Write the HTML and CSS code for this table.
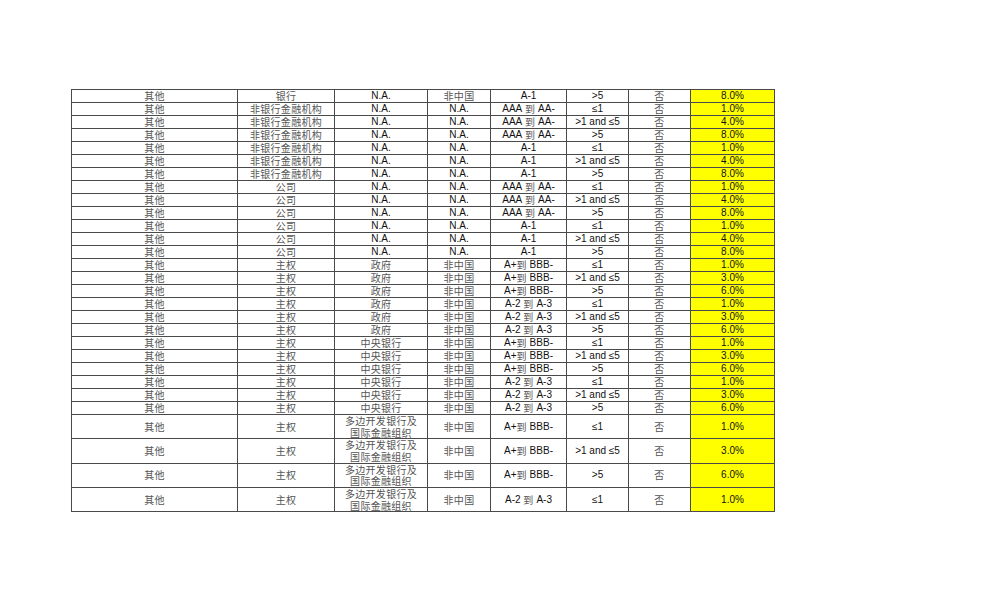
FILE: index.html
```html
<!DOCTYPE html>
<html lang="zh">
<head>
<meta charset="utf-8">
<title>表格</title>
<link rel="stylesheet" href="styles.css">
</head>
<body>
<div class="page">
<div class="grid">
<div class="row"><div class="cell zh">其他</div><div class="cell zh">银行</div><div class="cell">N.A.</div><div class="cell zh">非中国</div><div class="cell">A-1</div><div class="cell">&gt;5</div><div class="cell zh">否</div><div class="cell y">8.0%</div></div>
<div class="row"><div class="cell zh">其他</div><div class="cell zh">非银行金融机构</div><div class="cell">N.A.</div><div class="cell">N.A.</div><div class="cell">AAA&nbsp;<span class="zh">到</span>&nbsp;AA-</div><div class="cell">≤1</div><div class="cell zh">否</div><div class="cell y">1.0%</div></div>
<div class="row"><div class="cell zh">其他</div><div class="cell zh">非银行金融机构</div><div class="cell">N.A.</div><div class="cell">N.A.</div><div class="cell">AAA&nbsp;<span class="zh">到</span>&nbsp;AA-</div><div class="cell">&gt;1 and ≤5</div><div class="cell zh">否</div><div class="cell y">4.0%</div></div>
<div class="row"><div class="cell zh">其他</div><div class="cell zh">非银行金融机构</div><div class="cell">N.A.</div><div class="cell">N.A.</div><div class="cell">AAA&nbsp;<span class="zh">到</span>&nbsp;AA-</div><div class="cell">&gt;5</div><div class="cell zh">否</div><div class="cell y">8.0%</div></div>
<div class="row"><div class="cell zh">其他</div><div class="cell zh">非银行金融机构</div><div class="cell">N.A.</div><div class="cell">N.A.</div><div class="cell">A-1</div><div class="cell">≤1</div><div class="cell zh">否</div><div class="cell y">1.0%</div></div>
<div class="row"><div class="cell zh">其他</div><div class="cell zh">非银行金融机构</div><div class="cell">N.A.</div><div class="cell">N.A.</div><div class="cell">A-1</div><div class="cell">&gt;1 and ≤5</div><div class="cell zh">否</div><div class="cell y">4.0%</div></div>
<div class="row"><div class="cell zh">其他</div><div class="cell zh">非银行金融机构</div><div class="cell">N.A.</div><div class="cell">N.A.</div><div class="cell">A-1</div><div class="cell">&gt;5</div><div class="cell zh">否</div><div class="cell y">8.0%</div></div>
<div class="row"><div class="cell zh">其他</div><div class="cell zh">公司</div><div class="cell">N.A.</div><div class="cell">N.A.</div><div class="cell">AAA&nbsp;<span class="zh">到</span>&nbsp;AA-</div><div class="cell">≤1</div><div class="cell zh">否</div><div class="cell y">1.0%</div></div>
<div class="row"><div class="cell zh">其他</div><div class="cell zh">公司</div><div class="cell">N.A.</div><div class="cell">N.A.</div><div class="cell">AAA&nbsp;<span class="zh">到</span>&nbsp;AA-</div><div class="cell">&gt;1 and ≤5</div><div class="cell zh">否</div><div class="cell y">4.0%</div></div>
<div class="row"><div class="cell zh">其他</div><div class="cell zh">公司</div><div class="cell">N.A.</div><div class="cell">N.A.</div><div class="cell">AAA&nbsp;<span class="zh">到</span>&nbsp;AA-</div><div class="cell">&gt;5</div><div class="cell zh">否</div><div class="cell y">8.0%</div></div>
<div class="row"><div class="cell zh">其他</div><div class="cell zh">公司</div><div class="cell">N.A.</div><div class="cell">N.A.</div><div class="cell">A-1</div><div class="cell">≤1</div><div class="cell zh">否</div><div class="cell y">1.0%</div></div>
<div class="row"><div class="cell zh">其他</div><div class="cell zh">公司</div><div class="cell">N.A.</div><div class="cell">N.A.</div><div class="cell">A-1</div><div class="cell">&gt;1 and ≤5</div><div class="cell zh">否</div><div class="cell y">4.0%</div></div>
<div class="row"><div class="cell zh">其他</div><div class="cell zh">公司</div><div class="cell">N.A.</div><div class="cell">N.A.</div><div class="cell">A-1</div><div class="cell">&gt;5</div><div class="cell zh">否</div><div class="cell y">8.0%</div></div>
<div class="row"><div class="cell zh">其他</div><div class="cell zh">主权</div><div class="cell zh">政府</div><div class="cell zh">非中国</div><div class="cell">A+<span class="zh">到</span>&nbsp;BBB-</div><div class="cell">≤1</div><div class="cell zh">否</div><div class="cell y">1.0%</div></div>
<div class="row"><div class="cell zh">其他</div><div class="cell zh">主权</div><div class="cell zh">政府</div><div class="cell zh">非中国</div><div class="cell">A+<span class="zh">到</span>&nbsp;BBB-</div><div class="cell">&gt;1 and ≤5</div><div class="cell zh">否</div><div class="cell y">3.0%</div></div>
<div class="row"><div class="cell zh">其他</div><div class="cell zh">主权</div><div class="cell zh">政府</div><div class="cell zh">非中国</div><div class="cell">A+<span class="zh">到</span>&nbsp;BBB-</div><div class="cell">&gt;5</div><div class="cell zh">否</div><div class="cell y">6.0%</div></div>
<div class="row"><div class="cell zh">其他</div><div class="cell zh">主权</div><div class="cell zh">政府</div><div class="cell zh">非中国</div><div class="cell">A-2&nbsp;<span class="zh">到</span>&nbsp;A-3</div><div class="cell">≤1</div><div class="cell zh">否</div><div class="cell y">1.0%</div></div>
<div class="row"><div class="cell zh">其他</div><div class="cell zh">主权</div><div class="cell zh">政府</div><div class="cell zh">非中国</div><div class="cell">A-2&nbsp;<span class="zh">到</span>&nbsp;A-3</div><div class="cell">&gt;1 and ≤5</div><div class="cell zh">否</div><div class="cell y">3.0%</div></div>
<div class="row"><div class="cell zh">其他</div><div class="cell zh">主权</div><div class="cell zh">政府</div><div class="cell zh">非中国</div><div class="cell">A-2&nbsp;<span class="zh">到</span>&nbsp;A-3</div><div class="cell">&gt;5</div><div class="cell zh">否</div><div class="cell y">6.0%</div></div>
<div class="row"><div class="cell zh">其他</div><div class="cell zh">主权</div><div class="cell zh">中央银行</div><div class="cell zh">非中国</div><div class="cell">A+<span class="zh">到</span>&nbsp;BBB-</div><div class="cell">≤1</div><div class="cell zh">否</div><div class="cell y">1.0%</div></div>
<div class="row"><div class="cell zh">其他</div><div class="cell zh">主权</div><div class="cell zh">中央银行</div><div class="cell zh">非中国</div><div class="cell">A+<span class="zh">到</span>&nbsp;BBB-</div><div class="cell">&gt;1 and ≤5</div><div class="cell zh">否</div><div class="cell y">3.0%</div></div>
<div class="row"><div class="cell zh">其他</div><div class="cell zh">主权</div><div class="cell zh">中央银行</div><div class="cell zh">非中国</div><div class="cell">A+<span class="zh">到</span>&nbsp;BBB-</div><div class="cell">&gt;5</div><div class="cell zh">否</div><div class="cell y">6.0%</div></div>
<div class="row"><div class="cell zh">其他</div><div class="cell zh">主权</div><div class="cell zh">中央银行</div><div class="cell zh">非中国</div><div class="cell">A-2&nbsp;<span class="zh">到</span>&nbsp;A-3</div><div class="cell">≤1</div><div class="cell zh">否</div><div class="cell y">1.0%</div></div>
<div class="row"><div class="cell zh">其他</div><div class="cell zh">主权</div><div class="cell zh">中央银行</div><div class="cell zh">非中国</div><div class="cell">A-2&nbsp;<span class="zh">到</span>&nbsp;A-3</div><div class="cell">&gt;1 and ≤5</div><div class="cell zh">否</div><div class="cell y">3.0%</div></div>
<div class="row"><div class="cell zh">其他</div><div class="cell zh">主权</div><div class="cell zh">中央银行</div><div class="cell zh">非中国</div><div class="cell">A-2&nbsp;<span class="zh">到</span>&nbsp;A-3</div><div class="cell">&gt;5</div><div class="cell zh">否</div><div class="cell y">6.0%</div></div>
<div class="row tall"><div class="cell zh">其他</div><div class="cell zh">主权</div><div class="cell zh two">多边开发银行及<br>国际金融组织</div><div class="cell zh">非中国</div><div class="cell">A+<span class="zh">到</span>&nbsp;BBB-</div><div class="cell">≤1</div><div class="cell zh">否</div><div class="cell y">1.0%</div></div>
<div class="row tall"><div class="cell zh">其他</div><div class="cell zh">主权</div><div class="cell zh two">多边开发银行及<br>国际金融组织</div><div class="cell zh">非中国</div><div class="cell">A+<span class="zh">到</span>&nbsp;BBB-</div><div class="cell">&gt;1 and ≤5</div><div class="cell zh">否</div><div class="cell y">3.0%</div></div>
<div class="row tall"><div class="cell zh">其他</div><div class="cell zh">主权</div><div class="cell zh two">多边开发银行及<br>国际金融组织</div><div class="cell zh">非中国</div><div class="cell">A+<span class="zh">到</span>&nbsp;BBB-</div><div class="cell">&gt;5</div><div class="cell zh">否</div><div class="cell y">6.0%</div></div>
<div class="row tall"><div class="cell zh">其他</div><div class="cell zh">主权</div><div class="cell zh two">多边开发银行及<br>国际金融组织</div><div class="cell zh">非中国</div><div class="cell">A-2&nbsp;<span class="zh">到</span>&nbsp;A-3</div><div class="cell">≤1</div><div class="cell zh">否</div><div class="cell y">1.0%</div></div>
</div>
</div>
</body>
</html>
```
FILE: styles.css
```css
html, body {
  margin: 0;
  padding: 0;
  background: #ffffff;
}
.page {
  padding: 89px 0 0 71px;
}
.grid {
  display: grid;
  grid-template-columns: 1fr;
  row-gap: 1px;
  width: 704px;
  padding: 1px 0;
  background: #4a4a4a;
  font-family: "Liberation Sans", Arial, sans-serif;
  font-size: 10px;
  color: #111;
}
.row {
  display: grid;
  grid-template-columns: 165px 96px 92px 62px 75px 61px 61px 83px;
  column-gap: 1px;
  padding: 0 1px;
  height: 12px;
}
.row.tall {
  height: 23.3px;
}
.cell {
  background: #ffffff;
  display: flex;
  align-items: center;
  justify-content: center;
  text-align: center;
  white-space: nowrap;
  line-height: 12px;
}
.zh {
  font-family: "Noto Sans CJK SC", sans-serif;
  font-size: 10px;
  color: #555;
  letter-spacing: 0.3px;
}
.cell.two {
  line-height: 11.6px;
}
.cell.y {
  background: #ffff00;
}
```
